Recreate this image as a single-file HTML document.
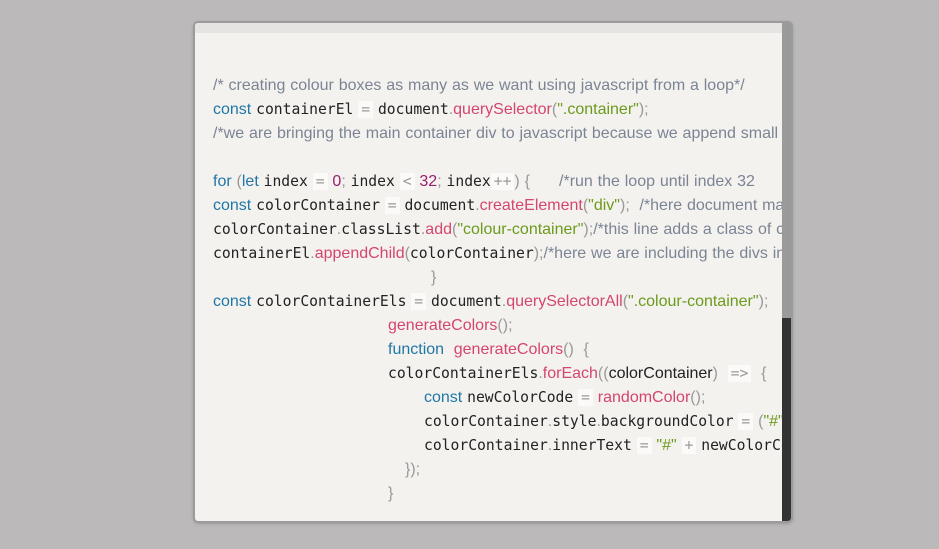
<!DOCTYPE html>
<html><head><style>
body{margin:0;width:939px;height:549px;background:#bbb9b9;overflow:hidden;font-family:"Liberation Sans",sans-serif}
.panel{position:absolute;left:195px;top:23px;width:596px;height:498px;background:#f4f2ef;border-radius:3px;box-shadow:0 0 0 2px #9c9c9c,0 1px 5px rgba(0,0,0,.45);overflow:hidden}
.top{position:absolute;left:0;top:0;width:100%;height:10px;background:#e6e4e2}
.sb{position:absolute;left:587px;top:0;width:9px;height:498px;background:#333;border-radius:0 3px 3px 0}
.th{position:absolute;left:587px;top:0;width:9px;height:295px;background:#9a9a9a}
.code{position:absolute;left:0;top:0;width:587px;height:498px;overflow:hidden}
.l{position:absolute;white-space:pre;font-size:16px;line-height:24px;color:#7b8494;word-spacing:0.4px}
.m{font-family:"DejaVu Sans Mono",monospace;font-size:14.7px;color:#222;word-spacing:0}
.k{color:#2177a6}.f{color:#d5456c}.s{color:#6b9a1c}.n{color:#9b1d6f}.p{color:#999}.c{color:#7b8494}
.o{font-family:"DejaVu Sans Mono",monospace;font-size:14.7px;color:#999;background:#fbfaf8;padding:0 3px}
</style></head><body>
<div class="panel"><div class="top"></div>
<div class="code">
<div class="l" style="left:18px;top:51px">/* creating colour boxes as many as we want using javascript from a loop*/</div>
<div class="l" style="left:18px;top:75px"><span class="k">const</span> <span class="m">containerEl</span> <span class="o">=</span> <span class="m">document</span><span class="p">.</span><span class="f">querySelector</span><span class="p">(</span><span class="s">".container"</span><span class="p">);</span></div>
<div class="l" style="left:18px;top:99px">/*we are bringing the main container div to javascript because we append small</div>
<div class="l" style="left:18px;top:147px"><span class="k">for</span> <span class="p">(</span><span class="k">let</span> <span class="m">index</span> <span class="o">=</span> <span class="n">0</span><span class="p">;</span> <span class="m">index</span> <span class="o">&lt;</span> <span class="n">32</span><span class="p">;</span> <span class="m">index</span><span class="o">++</span><span class="p">)</span> <span class="p">{</span>      /*run the loop until index 32</div>
<div class="l" style="left:18px;top:171px"><span class="k">const</span> <span class="m">colorContainer</span> <span class="o">=</span> <span class="m">document</span><span class="p">.</span><span class="f">createElement</span><span class="p">(</span><span class="s">"div"</span><span class="p">);</span>  /*here document makes</div>
<div class="l" style="left:18px;top:195px"><span class="m">colorContainer</span><span class="p">.</span><span class="m">classList</span><span class="p">.</span><span class="f">add</span><span class="p">(</span><span class="s">"colour-container"</span><span class="p">);</span>/*this line adds a class of co</div>
<div class="l" style="left:18px;top:219px"><span class="m">containerEl</span><span class="p">.</span><span class="f">appendChild</span><span class="p">(</span><span class="m">colorContainer</span><span class="p">);</span>/*here we are including the divs in</div>
<div class="l p" style="left:236px;top:243px">}</div>
<div class="l" style="left:18px;top:267px"><span class="k">const</span> <span class="m">colorContainerEls</span> <span class="o">=</span> <span class="m">document</span><span class="p">.</span><span class="f">querySelectorAll</span><span class="p">(</span><span class="s">".colour-container"</span><span class="p">);</span></div>
<div class="l" style="left:193px;top:291px"><span class="f">generateColors</span><span class="p">();</span></div>
<div class="l" style="left:193px;top:315px"><span class="k">function</span>  <span class="f">generateColors</span><span class="p">()</span>  <span class="p">{</span></div>
<div class="l" style="left:193px;top:339px"><span class="m">colorContainerEls</span><span class="p">.</span><span class="f">forEach</span><span class="p">((</span><span style="color:#222">colorContainer</span><span class="p">)</span>  <span class="o">=&gt;</span>  <span class="p">{</span></div>
<div class="l" style="left:229px;top:363px"><span class="k">const</span> <span class="m">newColorCode</span> <span class="o">=</span> <span class="f">randomColor</span><span class="p">();</span></div>
<div class="l" style="left:229px;top:387px"><span class="m">colorContainer</span><span class="p">.</span><span class="m">style</span><span class="p">.</span><span class="m">backgroundColor</span> <span class="o">=</span> <span class="p">(</span><span class="s">"#"</span> + newColorCode</div>
<div class="l" style="left:229px;top:411px"><span class="m">colorContainer</span><span class="p">.</span><span class="m">innerText</span> <span class="o">=</span> <span class="s">"#"</span> <span class="o">+</span> <span class="m">newColorCode</span></div>
<div class="l p" style="left:210px;top:435px">});</div>
<div class="l p" style="left:193px;top:459px">}</div>
</div>
<div class="sb"></div><div class="th"></div>
</div>
</body></html>
